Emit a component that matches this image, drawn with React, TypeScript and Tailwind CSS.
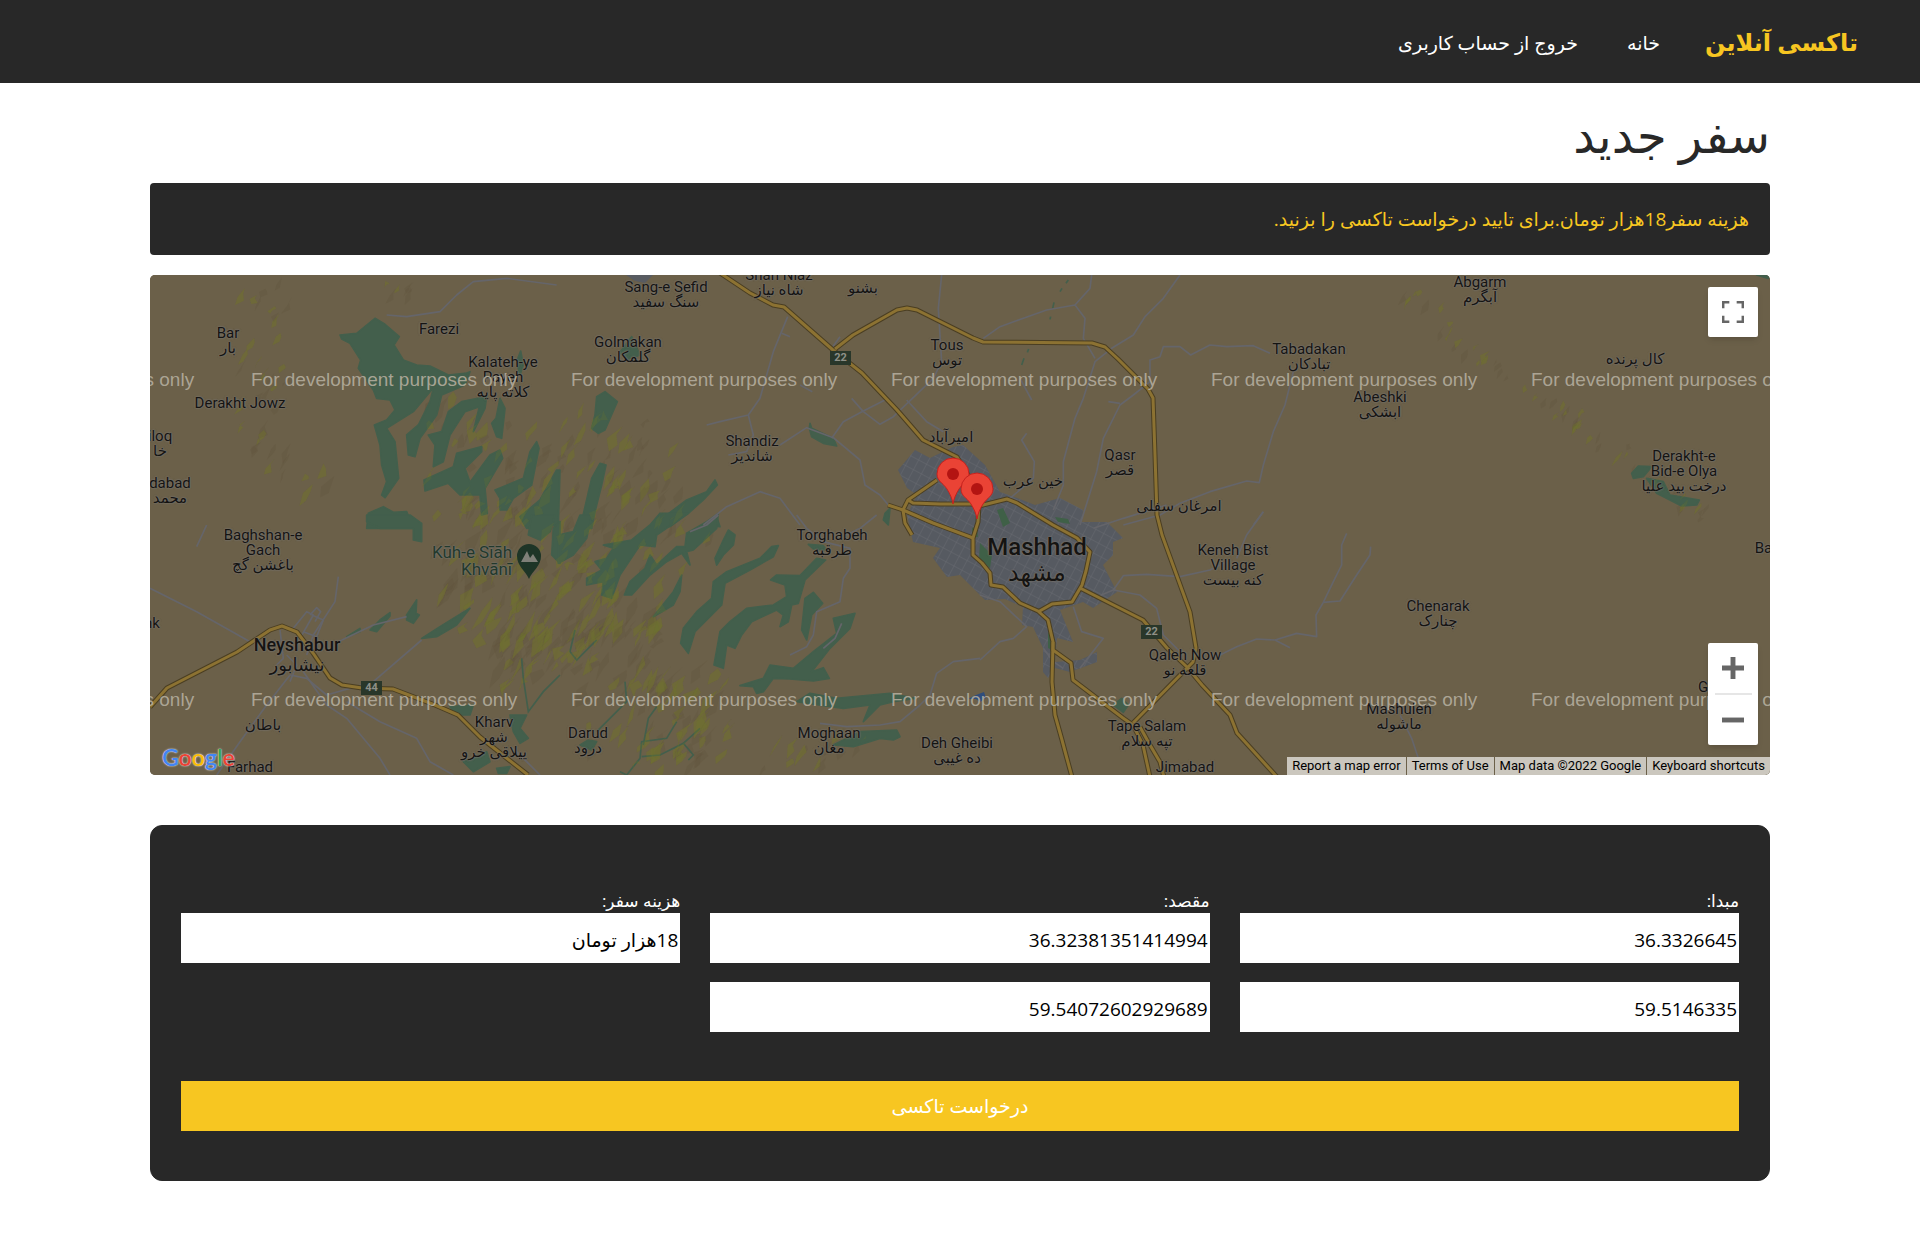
import React from "react";

const rtlFont = "font-['Open_Sans','DejaVu_Sans',sans-serif]";

/* ---------- map data ---------- */

type Label = { x: number; y: number; lines: string[]; kind?: "city" | "town" | "peak" };

const labels: Label[] = [
  { x: 78, y: 59, lines: ["Bar", "بار"] },
  { x: 289, y: 55, lines: ["Farezi"] },
  { x: 353, y: 88, lines: ["Kalateh-ye", "Payeh", "کلاته پایه"] },
  { x: 90, y: 129, lines: ["Derakht Jowz"] },
  { x: 10, y: 162, lines: ["iloq", "خا"] },
  { x: 20, y: 209, lines: ["dabad", "محمد"] },
  { x: 2, y: 349, lines: ["nk"] },
  { x: 516, y: 13, lines: ["Sang-e Sefid", "سنگ سفید"] },
  { x: 629, y: 1, lines: ["Shah Niaz", "شاه نیاز"] },
  { x: 713, y: 14, lines: ["بشنو"] },
  { x: 478, y: 68, lines: ["Golmakan", "گلمکان"] },
  { x: 797, y: 71, lines: ["Tous", "توس"] },
  { x: 602, y: 167, lines: ["Shandiz", "شاندیز"] },
  { x: 801, y: 163, lines: ["امیرآباد"] },
  { x: 970, y: 181, lines: ["Qasr", "قصر"] },
  { x: 883, y: 207, lines: ["خین عرب"] },
  { x: 1029, y: 232, lines: ["امرغان سفلی"] },
  { x: 1159, y: 75, lines: ["Tabadakan", "تبادکان"] },
  { x: 1230, y: 123, lines: ["Abeshki", "ابشکی"] },
  { x: 1330, y: 8, lines: ["Abgarm", "آبگرم"] },
  { x: 1485, y: 85, lines: ["کال پرنده"] },
  { x: 1534, y: 182, lines: ["Derakht-e", "Bid-e Olya", "درخت بید علیا"] },
  { x: 113, y: 261, lines: ["Baghshan-e", "Gach", "باغشن گچ"] },
  { x: 322, y: 278, lines: ["Kūh-e Sīāh", "Khvānī"], kind: "peak" },
  { x: 147, y: 370, lines: ["Neyshabur", "نیشابور"], kind: "town" },
  { x: 113, y: 451, lines: ["باطان"] },
  { x: 344, y: 448, lines: ["Kharv", "شهر", "ییلاقی خرو"] },
  { x: 438, y: 459, lines: ["Darud", "درود"] },
  { x: 100, y: 493, lines: ["Farhad"] },
  { x: 679, y: 459, lines: ["Moghaan", "مغان"] },
  { x: 682, y: 261, lines: ["Torghabeh", "طرقبه"] },
  { x: 807, y: 469, lines: ["Deh Gheibi", "ده غیبی"] },
  { x: 887, y: 272, lines: ["Mashhad", "مشهد"], kind: "city" },
  { x: 1083, y: 276, lines: ["Keneh Bist", "Village", "کنه بیست"] },
  { x: 1035, y: 381, lines: ["Qaleh Now", "قلعه نو"] },
  { x: 997, y: 452, lines: ["Tape Salam", "تپه سلام"] },
  { x: 1035, y: 493, lines: ["Jimabad"] },
  { x: 1288, y: 332, lines: ["Chenarak", "چنارک"] },
  { x: 1249, y: 435, lines: ["Mashuleh", "ماشوله"] },
  { x: 1616, y: 274, lines: ["Bar"] },
  { x: 1553, y: 413, lines: ["G"] },
];

type Tile = { x: number; y: number; woods: string[]; creeks?: string[]; lanes?: string[] };

const tiles: Tile[] = [
  {
    x: -10,
    y: -10,
    woods: [
      "600,210 650,205 705,160 735,178 778,215 762,240 790,285 830,300 870,303 925,330 975,325 960,365 880,368 820,440 740,490 765,530 776,640 735,698 725,690 740,650 725,600 720,540 703,480 740,465 765,435 750,405 710,400 700,375 655,310 662,285 630,235 605,222",
      "880,370 940,340 990,320 975,360 905,390 890,450 840,520 825,575 805,570 800,510 835,480 870,410",
      "865,510 905,500 925,440 965,410 1040,395 1035,430 1000,500 1018,425 975,440 930,510 910,590 880,605 885,540",
      "1080,400 1095,430 1085,520 1070,515 1055,475 1068,460",
      "1130,290 1142,258 1150,300 1140,330",
      "852,645 940,605 950,565 1025,545 1025,560 975,610 990,652 1050,570 1080,555 1088,580 1035,670 1042,745 1025,750 1020,690 960,690 925,655 855,678",
      "1065,675 1150,640 1170,560 1190,530 1197,550 1175,660 1120,700 1100,735 1080,735 1080,700",
      "1140,755 1200,705 1250,615 1260,615 1255,780 1160,790",
      "680,790 685,745 730,725 760,742 800,740 820,790",
    ],
    lanes: ["1250,60 1100,40 1000,50 950,90 900,140 800,155 740,150"],
  },
  {
    x: 410,
    y: -10,
    woods: [
      "110,395 135,380 172,410 150,460 135,495 115,505 95,490 105,450",
      "60,790 95,640 120,595 138,600 125,660 105,740 95,790",
      "280,780 380,705 440,680 465,645 472,660 430,705 385,745 330,785",
      "430,780 470,755 480,785",
      "750,475 755,490 820,520 830,543 790,535 755,515 748,490",
      "180,262 215,215 240,270 200,285",
      "975,745 990,730 985,780 970,765",
    ],
    lanes: [
      "683,155 640,260 600,400 565,450 480,470 440,480",
      "665,205 690,215",
      "565,450 580,510 560,560 505,570",
      "660,540 740,488 820,518 900,585 915,660 960,690 985,720",
      "815,520 850,470 910,438 975,405",
      "875,400 910,440 960,478 1000,455 1120,340 1145,290 1135,130 1145,30",
      "1040,405 1100,470 1150,500",
      "430,780 500,725 600,680 660,700 720,780",
      "720,360 757,380",
      "840,215 815,250",
    ],
  },
  {
    x: 830,
    y: -10,
    woods: ["50,735 70,730 85,770 60,765", "222,755 265,762 270,780 230,775"],
    creeks: ["265,45 258,55", "246,70 240,80", "222,112 218,130", "212,155 210,163", "146,252 142,262", "132,280 125,300"],
    lanes: [
      "600,30 550,100 495,155 460,210 395,250 345,290 310,400 285,460 250,590 250,660 220,735",
      "10,220 60,185 200,135 285,120 315,160 310,220 345,280",
      "285,120 330,70 335,30",
      "870,265 820,242 740,245 690,240 632,270 600,245 550,245 540,275 510,285 510,350 460,390 420,420 370,520 350,620 300,780",
      "420,415 385,410",
      "940,320 915,420 880,500 850,600 838,653 800,648 690,680 600,715 540,750 430,780",
      "140,505 125,525 163,590 160,640 90,700",
      "120,340 155,405",
      "850,740 820,780",
    ],
  },
  {
    x: 1230,
    y: -10,
    woods: [
      "755,625 775,603 815,605 790,635 760,640",
      "800,640 850,650 870,690 958,705 950,720 905,723 830,685",
      "1130,30 1165,30 1165,40",
    ],
  },
  {
    x: -10,
    y: 240,
    woods: [
      "680,0 810,0 845,25 845,80 820,75 820,40 720,40 680,20",
      "1175,0 1245,0 1230,50 1200,75 1165,60",
      "1240,40 1260,20 1260,145 1235,120",
      "800,300 830,255 828,295 838,300 820,325 800,315",
      "690,345 720,315 750,293 750,303 710,350",
      "620,365 660,340 660,350",
      "845,370 900,335 940,310 990,280 950,330 890,365",
      "930,575 1000,570 990,600 950,600",
      "1110,600 1160,600 1140,640 1165,670 1140,685 1120,650",
      "970,740 1040,710 1050,740 1000,770",
      "1070,760 1110,755 1100,775 1075,775",
    ],
    creeks: ["1145,430 1150,490 1165,590 1210,530 1260,480"],
    lanes: [
      "30,220 170,290 330,380",
      "595,185 585,260 520,360 500,420",
      "595,380 700,330 800,305",
      "845,375 700,500 560,540 500,490 450,480",
      "460,340 500,290 520,300 480,370",
      "510,300 530,278 542,290 525,320",
      "490,350 530,365 550,315 515,300",
      "450,480 380,570 300,680 230,780",
      "490,470 560,570 620,610 720,730 750,780",
      "620,560 720,620 830,670 870,740 940,780",
      "1120,700 1200,780",
      "200,30 170,95",
      "440,420 470,450 450,500",
      "420,345 430,430 410,450",
    ],
  },
  {
    x: 410,
    y: 240,
    woods: [
      "-5,60 40,50 60,0 95,0 80,70 40,120 -5,145",
      "130,90 215,75 270,30 300,-5 385,-5 290,60 285,95 240,90 180,180 155,250 125,240 130,200 80,210 80,190 125,165 105,140 140,130 160,100",
      "380,55 440,20 475,-5 470,40 400,105 380,110 390,150 365,115 320,140 270,180 215,240 193,240 210,200 255,160 270,120 290,150 350,95 375,95",
      "490,75 505,45 525,60 520,90 490,120 470,150 465,130",
      "635,95 655,92 640,125 570,165 495,205 485,270 405,350 385,415 362,385 370,340 410,290 455,250 460,200 500,170 600,130",
      "365,180 360,230 340,270 280,305 340,230",
      "632,195 650,180 720,182 770,130 797,135 735,195 715,265 695,270 685,320 660,335 670,300 650,285 575,320 545,360 525,400 500,390 490,460 462,450 480,350 510,320 560,280 640,270 680,245 675,210",
      "760,232 788,265 755,300 740,375 725,345 735,250",
      "820,310 885,295 870,340 810,400 755,470 790,458 808,490 760,498 690,492 640,490 610,530 590,535 580,515 540,512 610,490 630,450 700,460 760,410 830,355",
      "710,560 750,535 830,550 990,535 1065,550 1000,560 960,570 910,620 930,570 850,580",
      "820,690 900,650 1010,645 1020,665 1000,675 960,670 880,695",
      "745,88 790,92 800,105 760,102",
      "60,690 85,675 110,680 95,705",
    ],
    creeks: [
      "110,375 50,435 30,410 45,345",
      "180,770 200,780 240,730 245,680 320,670 350,620",
      "245,725 300,720 370,685 420,640",
      "370,685 400,720 385,735",
      "250,690 265,610 290,575",
      "195,500 200,560 110,650",
    ],
    lanes: [
      "710,0 740,40 790,80 870,100 870,160 850,190 840,260 770,290 760,360 740,395 690,420",
      "950,0 900,40 860,60",
      "1260,430 1180,440 1130,475 1110,540 1080,570 1020,620 960,630 860,635 780,625",
      "845,325 825,370 790,400",
      "475,0 440,30 390,50",
    ],
  },
  {
    x: 830,
    y: 240,
    woods: [
      "0,85 40,125 30,160 0,130",
      "35,180 50,185 50,210 35,208",
      "55,-5 80,0 100,45 75,25",
      "220,5 250,5 270,25 240,25",
      "205,350 215,345 215,405 205,400",
      "400,570 425,550 445,570 430,592",
    ],
    lanes: [
      "340,40 430,10 560,-30",
      "740,140 690,165 600,185 500,178 430,182 400,225 340,250",
      "400,225 480,240 530,280 550,360 600,410",
      "850,-10 800,60 770,130",
      "720,420 770,395 830,372 885,375 950,355 1010,365 1008,300 1030,262 1060,200 1085,150 1085,90 1100,55",
      "1030,262 1080,258 1130,180 1170,120 1172,95",
      "885,375 930,398",
      "0,240 60,260 140,335 100,370 60,380 0,435",
      "280,275 305,350 370,370 300,460",
      "250,460 220,440 190,400",
    ],
  },
  { x: 1230, y: 240, woods: [], lanes: ["60,600 95,670 115,730"] },
];

const highways = [
  "570,-2 600,18 623,30 634,32 683,75 712,98 747,135 773,165 807,182 818,200 829,232",
  "685,74 703,60 747,35 757,33 767,35 823,63 833,67 942,68 955,72 968,84 998,114 1003,123 1005,180 1007,240 1012,260 1040,337 1046,373 1043,387 983,448",
  "0,432 17,413 87,377 108,363 120,355 132,351 147,357 163,378 180,403 192,410 212,413 243,414 285,430 308,440 330,462 378,500",
  "787,205 758,225 753,235 755,248 762,260",
  "758,225 763,228 790,229 829,229",
  "738,230 753,235 783,248 823,263",
  "829,229 828,247 823,263 823,280 832,288 840,298 841,310 853,312 870,328 888,336 898,345 903,367 902,407 905,440 912,465 916,480 922,502",
  "903,367 903,375 921,388 923,405 973,443 983,450 993,470 1000,502",
  "990,452 1000,470 1010,487 1014,502",
  "829,231 857,224 867,228 903,250 927,263 940,277 936,296 932,310 922,327 902,329 888,337",
  "930,313 993,345 1017,373 1037,392 1052,410 1080,440 1087,458 1127,502",
];

const cityShape =
  "748,195 765,175 780,183 803,172 813,170 835,190 850,217 867,223 885,230 910,223 933,235 932,247 957,247 963,253 973,263 963,267 963,280 953,290 967,317 943,333 933,327 910,335 923,367 907,363 905,387 930,385 947,377 947,387 920,397 905,393 898,403 893,397 893,373 883,352 872,350 873,332 855,324 835,325 823,313 810,300 797,302 783,283 790,273 763,267 757,240 767,220 757,213";

/* Relief zones: a centre line from (x1,y1) to (x2,y2) with facets scattered around it. */
const zones = [
  { x1: 120, y1: 10, x2: 100, y2: 170, spread: 34, count: 30, size: 1 },
  { x1: 230, y1: 10, x2: 265, y2: 15, spread: 16, count: 6, size: 1 },
  { x1: 120, y1: 185, x2: 190, y2: 215, spread: 40, count: 9, size: 1.2 },
  { x1: 300, y1: 150, x2: 470, y2: 330, spread: 80, count: 150, size: 1.4 },
  { x1: 320, y1: 290, x2: 400, y2: 400, spread: 60, count: 90, size: 1.7 },
  { x1: 430, y1: 150, x2: 520, y2: 260, spread: 60, count: 60, size: 1.3 },
  { x1: 420, y1: 320, x2: 540, y2: 460, spread: 70, count: 90, size: 1.6 },
  { x1: 440, y1: 470, x2: 700, y2: 480, spread: 40, count: 36, size: 1.2 },
  { x1: 1250, y1: 15, x2: 1340, y2: 90, spread: 20, count: 18, size: 0.8 },
  { x1: 1340, y1: 90, x2: 1480, y2: 185, spread: 18, count: 24, size: 0.9 },
  { x1: 1480, y1: 190, x2: 1580, y2: 260, spread: 14, count: 12, size: 0.8 },
];

type Facet = { points: string; light: boolean };

function makeFacets() {
  let seed = 7;
  const rnd = () => {
    seed = (seed * 16807) % 2147483647;
    return seed / 2147483647;
  };
  const out: Facet[] = [];
  for (const z of zones) {
    for (let i = 0; i < z.count; i++) {
      const t = rnd();
      const cx = z.x1 + (z.x2 - z.x1) * t + (rnd() + rnd() - 1) * z.spread;
      const cy = z.y1 + (z.y2 - z.y1) * t + (rnd() + rnd() - 1) * z.spread * 0.7;
      const len = (4 + rnd() * 9) * z.size;
      const tilt = 0.3 + rnd() * 0.7;
      const j = () => (rnd() - 0.5) * 5 * z.size;
      const pts = [
        [cx - len * 0.5 * tilt, cy + len * 0.8],
        [cx - 2 * z.size + j(), cy + j()],
        [cx + len * 0.5 + j(), cy - len * 0.7],
        [cx + 3 * z.size + j(), cy - len * 0.2],
        [cx + 2 * z.size + j(), cy + len * 0.3 + j()],
      ];
      out.push({ points: pts.map((p) => p.map((n) => n.toFixed(1)).join(",")).join(" "), light: rnd() > 0.45 });
    }
  }
  return out;
}

const facets = makeFacets();

/* ---------- map pieces ---------- */

function Terrain() {
  return (
    <svg width="1620" height="500" viewBox="0 0 1620 500" className="block" aria-hidden="true">
      <defs>
        <pattern id="streets" width="9" height="11" patternUnits="userSpaceOnUse" patternTransform="rotate(28)">
          <path d="M0 0H9M0 0V11" stroke="#6f7178" strokeWidth="1" fill="none" />
        </pattern>
      </defs>
      <rect width="1620" height="500" fill="#6b6049" />
      <polygon points="476,0 503,0 495,8 485,6" fill="#585b61" />
      {facets.map((f, i) => (
        <polygon key={i} points={f.points} fill={f.light ? "#756a36" : "#5f523d"} opacity={f.light ? 0.6 : 0.3} />
      ))}
      {tiles.map((t, i) => (
        <g key={i} transform={`translate(${t.x} ${t.y}) scale(0.33333)`}>
          {t.woods.map((w) => (
            <polygon key={w} points={w} fill="#435f4c" stroke="#435f4c" strokeWidth="5" strokeLinejoin="round" />
          ))}
          {t.creeks?.map((c) => (
            <polyline key={c} points={c} fill="none" stroke="#435f4c" strokeWidth="5" />
          ))}
        </g>
      ))}
      {facets.map((f, i) =>
        f.light ? <polygon key={i} points={f.points} fill="#68732f" opacity="0.26" /> : null,
      )}
      <polygon points={cityShape} fill="#565a61" />
      <polygon points={cityShape} fill="url(#streets)" opacity="0.7" />
      {tiles.map((t, i) => (
        <g key={i} transform={`translate(${t.x} ${t.y}) scale(0.33333)`}>
          {t.lanes?.map((l) => (
            <polyline key={l} points={l} fill="none" stroke="#65656a" strokeWidth="5" strokeLinejoin="round" />
          ))}
        </g>
      ))}
      <g fill="#3f6047">
        <polygon points="847,235 853,233 860,248 853,252" />
        <polygon points="905,242 918,244 920,249 908,247" />
        <polygon points="822,253 827,252 828,262 822,262" />
        <polygon points="830,268 842,280 840,293 829,284" />
        <polygon points="898,358 902,355 902,375 898,373" />
      </g>
      <path d="M818 424l8-4 8-3 2 6-6 4-4-3z" fill="#2f4d7c" />
      {highways.map((h) => (
        <polyline key={h} points={h} fill="none" stroke="#4a3e22" strokeWidth="5" strokeLinejoin="round" />
      ))}
      {highways.map((h) => (
        <polyline key={h} points={h} fill="none" stroke="#8c7232" strokeWidth="3" strokeLinejoin="round" />
      ))}
      <path d="M379 304c-4-9-12-13-12-23a12 12 0 0 1 24 0c0 10-8 14-12 23z" fill="#1e3527" />
      <path d="M371 287l6-11 3 7 3-4 5 8z" fill="#7f8078" />
    </svg>
  );
}

function PlaceLabel({ label }: { label: Label }) {
  const kinds = {
    city: "text-2xl leading-[26px] font-medium text-center text-[#151412]",
    town: "text-lg leading-5 font-medium text-center text-[#151412]",
    peak: "text-[17px] leading-[17px] text-right text-[#22392c]",
    plain: "text-[15px] leading-[15px] text-center text-[#151412]",
  };
  const half = { city: 13, town: 10, peak: 9, plain: 8 };
  const kind = label.kind ?? "plain";
  return (
    <div
      className={`absolute -translate-x-1/2 whitespace-nowrap [text-shadow:0_0_2px_#77736d,0_0_2px_#77736d,0_0_1px_#77736d] ${kinds[kind]}`}
      style={{ left: label.x, top: label.y - half[kind] }}
    >
      {label.lines.map((line) => (
        <div key={line}>{line}</div>
      ))}
    </div>
  );
}

function RoadShield({ x, y, children }: { x: number; y: number; children: string }) {
  return (
    <span
      className="absolute h-[14px] w-[21px] bg-[#29372a] text-center text-[11px] leading-[14px] font-bold text-[#8e9087]"
      style={{ left: x, top: y }}
    >
      {children}
    </span>
  );
}

function Pin({ x, y }: { x: number; y: number }) {
  return (
    <svg width="34" height="48" viewBox="0 0 34 48" className="absolute" style={{ left: x - 17, top: y - 47 }} aria-hidden="true">
      <path
        d="M17 47c-1-6-3-10-6-15C7 26 1 24 1 17a16 16 0 0 1 32 0c0 7-6 9-10 15-3 5-5 9-6 15z"
        fill="#ea4335"
        stroke="#c5221f"
        strokeWidth="1"
      />
      <circle cx="17" cy="17" r="6" fill="#b31412" />
    </svg>
  );
}

const watermarkColumns = [-222, 101, 421, 741, 1061, 1381];

function TripMap() {
  return (
    <section
      dir="ltr"
      aria-label="نقشه سفر"
      className="relative h-[500px] overflow-hidden rounded-[5px] bg-[#6b6049] font-[Roboto,'DejaVu_Sans',sans-serif]"
    >
      <div className="absolute top-0 left-1/2 h-[500px] w-[1620px] -translate-x-1/2">
        <Terrain />
        <RoadShield x={680} y={76}>22</RoadShield>
        <RoadShield x={991} y={350}>22</RoadShield>
        <RoadShield x={211} y={406}>44</RoadShield>
        {labels.map((l) => (
          <PlaceLabel key={l.lines[0] + l.x} label={l} />
        ))}
        {[105, 425].map((y) =>
          watermarkColumns.map((x) => (
            <span
              key={`${x}-${y}`}
              className="absolute font-['Liberation_Sans',sans-serif] text-[19px] leading-6 whitespace-nowrap text-[#b5ae9f]/90"
              style={{ left: x, top: y - 12 }}
            >
              For development purposes only
            </span>
          )),
        )}
        <Pin x={803} y={229} />
        <Pin x={827} y={244} />
      </div>

      <a
        href="#google"
        className="absolute bottom-0.5 left-3 font-[Lato,sans-serif] text-[23px] leading-8 font-semibold [text-shadow:0_0_2px_#ddd,0_0_1px_#ddd]"
      >
        <span className="text-[#4285f4]">G</span>
        <span className="text-[#ea4335]">o</span>
        <span className="text-[#fbbc05]">o</span>
        <span className="text-[#4285f4]">g</span>
        <span className="text-[#34a853]">l</span>
        <span className="text-[#ea4335]">e</span>
      </a>

      <button
        type="button"
        aria-label="Toggle fullscreen view"
        className="absolute top-3 right-3 flex size-[50px] items-center justify-center rounded-[2px] bg-white shadow-md"
      >
        <svg width="22" height="22" viewBox="0 0 18 18" fill="#666" aria-hidden="true">
          <path d="M0 0v6h2V2h4V0H0zm16 0h-4v2h4v4h2V0h-2zm0 16h-4v2h6v-6h-2v4zM2 12H0v6h6v-2H2v-4z" />
        </svg>
      </button>

      <div className="absolute right-3 bottom-[30px] flex w-[50px] flex-col items-center rounded-[2px] bg-white shadow-md">
        <button type="button" aria-label="Zoom in" className="flex h-[50px] w-full items-center justify-center">
          <svg width="22" height="22" viewBox="0 0 18 18" fill="#666" aria-hidden="true">
            <path d="M18 7h-7V0H7v7H0v4h7v7h4v-7h7z" />
          </svg>
        </button>
        <div className="h-[2px] w-[37px] bg-[#e6e6e6]" />
        <button type="button" aria-label="Zoom out" className="flex h-[50px] w-full items-center justify-center">
          <svg width="22" height="22" viewBox="0 0 18 18" fill="#666" aria-hidden="true">
            <path d="M0 7h18v4H0z" />
          </svg>
        </button>
      </div>

      <div className="absolute right-0 bottom-0 flex h-[18px] divide-x divide-[#6b6049] bg-[#cbc7be] text-[13px] leading-[18px] text-black">
        <a href="#report" className="px-[5px]">Report a map error</a>
        <a href="#terms" className="px-[5px]">Terms of Use</a>
        <span className="px-[5px]">Map data ©2022 Google</span>
        <button type="button" className="px-[5px]">Keyboard shortcuts</button>
      </div>
    </section>
  );
}

/* ---------- page ---------- */

function Field({ id, label, values }: { id: string; label: string; values: string[] }) {
  return (
    <div className="flex flex-col">
      <label htmlFor={`${id}-0`} className="text-[17px] leading-6 text-white">
        {label}
      </label>
      <div className="flex flex-col gap-[19px]">
        {values.map((v, i) => (
          <input
            key={v}
            id={`${id}-${i}`}
            aria-label={i > 0 ? label : undefined}
            type="text"
            readOnly
            defaultValue={v}
            className="h-[50px] w-full bg-white px-0.5 pt-1 text-right text-[19px] text-black"
          />
        ))}
      </div>
    </div>
  );
}

export default function App() {
  return (
    <div dir="rtl" className={`min-h-screen bg-white text-[#282828] ${rtlFont}`}>
      <header className="flex h-[83px] items-center bg-[#282828] px-[62px]">
        <a href="#top" className="text-2xl font-bold text-[#f7c621]">
          تاکسی آنلاین
        </a>
        <nav className="mr-[45px] flex gap-[49px] pt-1 text-[19px] text-white">
          <a href="#home">خانه</a>
          <a href="#logout">خروج از حساب کاربری</a>
        </nav>
      </header>

      <main className="mx-auto w-full max-w-[1620px]">
        <h1 className="pt-4 pb-3 text-[48px] leading-[72px]">سفر جدید</h1>
        <div role="status" className="flex h-[72px] items-center rounded bg-[#282828] px-[21px] text-[19px] text-[#f7c621]">
          هزینه سفر18هزار تومان.برای تایید درخواست تاکسی را بزنید.
        </div>
        <div className="mt-5">
          <TripMap />
        </div>
        <form
          onSubmit={(e) => e.preventDefault()}
          className="mt-[50px] rounded-xl border border-[#282828] bg-[#282828] px-[30px] pt-[63px] pb-[49px]"
        >
          <div className="grid grid-cols-3 gap-[30px]">
            <Field id="origin" label="مبدا:" values={["36.3326645", "59.5146335"]} />
            <Field id="destination" label="مقصد:" values={["36.32381351414994", "59.54072602929689"]} />
            <Field id="cost" label="هزینه سفر:" values={["18هزار تومان"]} />
          </div>
          <button type="submit" className="mt-[49px] h-[50px] w-full bg-[#f7c621] text-[19px] text-white">
            درخواست تاکسی
          </button>
        </form>
      </main>
    </div>
  );
}
